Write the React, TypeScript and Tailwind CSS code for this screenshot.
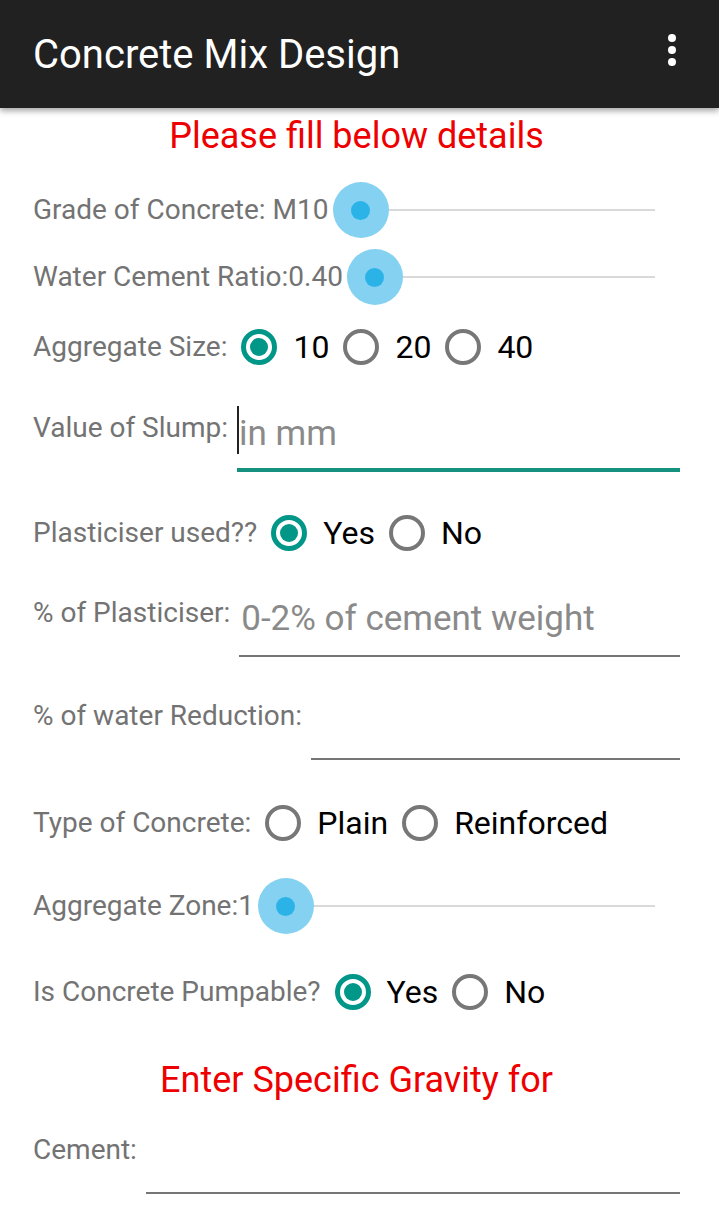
import React from "react";

const font = { fontFamily: "Roboto, 'Noto Sans', sans-serif" };

function Radio({ checked }: { checked?: boolean }) {
  return (
    <span
      className={
        "flex h-[36px] w-[36px] shrink-0 items-center justify-center rounded-full " +
        (checked ? "border-[5px] border-[#009688]" : "border-[4px] border-[#777777]")
      }
    >
      {checked && <span className="h-[18px] w-[18px] rounded-full bg-[#009688]" />}
    </span>
  );
}

function RadioRow({ label, options, checked, className }: { label: string; options: string[]; checked?: number; className: string }) {
  return (
    <div className={"flex h-[48px] items-center " + className}>
      <span className="text-[28px] leading-[28px] text-[#737373]">{label}</span>
      {options.map((o, i) => (
        <div key={o} className="ml-[14px] flex items-center">
          <Radio checked={checked === i} />
          <span className="ml-[16px] text-[32px] leading-[32px] text-black">{o}</span>
        </div>
      ))}
    </div>
  );
}

function SliderRow({ label, className }: { label: string; className: string }) {
  return (
    <div className={"flex h-[56px] items-center " + className}>
      <span className="text-[28px] leading-[28px] text-[#737373]">{label}</span>
      <div className="relative flex h-full flex-1 items-center pl-[32px] pr-[25px]">
        <div className="h-[2px] flex-1 bg-[#d9d9d9]" />
        {/* thumb with pressed halo */}
        <div className="absolute left-[4px] top-0 flex h-[56px] w-[56px] items-center justify-center rounded-full bg-[#84d1f1]">
          <div className="h-[19px] w-[19px] rounded-full bg-[#2bb3e8]" />
        </div>
      </div>
    </div>
  );
}

function InputRow({
  label,
  placeholder,
  focused,
  className,
}: {
  label: string;
  placeholder?: string;
  focused?: boolean;
  className: string;
}) {
  return (
    <div className={"flex h-[64px] items-start " + className}>
      <span className="mt-[6px] text-[28px] leading-[28px] text-[#737373]">{label}</span>
      <div
        className={
          "relative ml-[9px] flex h-full flex-1 items-start " +
          (focused ? "border-b-4 border-[#15917f]" : "border-b-2 border-[#757575]")
        }
      >
        {focused && <span className="absolute left-0 top-[-2px] h-[48px] w-[2px] bg-[#222]" />}
        <span className="ml-[2px] mt-[8px] text-[35px] leading-[35px] text-[#8a8a8a]">{placeholder}</span>
      </div>
    </div>
  );
}

export default function App() {
  return (
    <div className="min-h-[1227px] w-[719px] overflow-hidden bg-white" style={font}>
      {/* Action bar */}
      <div className="relative z-10 flex h-[108px] items-center justify-between bg-[#212121] pl-[33px] pr-[43px] shadow-[0_3px_6px_rgba(0,0,0,0.35)]">
        <span className="mb-[-2px] text-[40px] leading-[40px] text-white">Concrete Mix Design</span>
        <div className="mb-[8px] flex flex-col gap-[4px]">
          <span className="h-[8px] w-[8px] rounded-full bg-white" />
          <span className="h-[8px] w-[8px] rounded-full bg-white" />
          <span className="h-[8px] w-[8px] rounded-full bg-white" />
        </div>
      </div>

      <div className="flex flex-col px-[33px] pr-[39px]">
        <div className="flex h-[56px] items-center justify-center text-[36px] leading-[36px] text-[#ee0000]">
          Please fill below details
        </div>
        <SliderRow label="Grade of Concrete: M10" className="mt-[18px]" />
        <SliderRow label="Water Cement Ratio:0.40" className="mt-[11px]" />
        <RadioRow label="Aggregate Size:" options={["10", "20", "40"]} checked={0} className="mt-[18px]" />
        <InputRow label="Value of Slump:" placeholder="in mm" focused className="mt-[37px]" />
        <RadioRow label="Plasticiser used??" options={["Yes", "No"]} checked={0} className="mt-[37px]" />
        <InputRow label="% of Plasticiser:" placeholder="0-2% of cement weight" className="mt-[36px]" />
        <InputRow label="% of water Reduction:" className="mt-[39px]" />
        <RadioRow label="Type of Concrete:" options={["Plain", "Reinforced"]} className="mt-[39px]" />
        <SliderRow label="Aggregate Zone:1" className="mt-[31px]" />
        <RadioRow label="Is Concrete Pumpable?" options={["Yes", "No"]} checked={0} className="mt-[34px]" />
        <div className="mt-[36px] flex h-[56px] items-center justify-center text-[36px] leading-[36px] text-[#ee0000]">
          Enter Specific Gravity for
        </div>
        <InputRow label="Cement:" className="mt-[22px]" />
      </div>
    </div>
  );
}
